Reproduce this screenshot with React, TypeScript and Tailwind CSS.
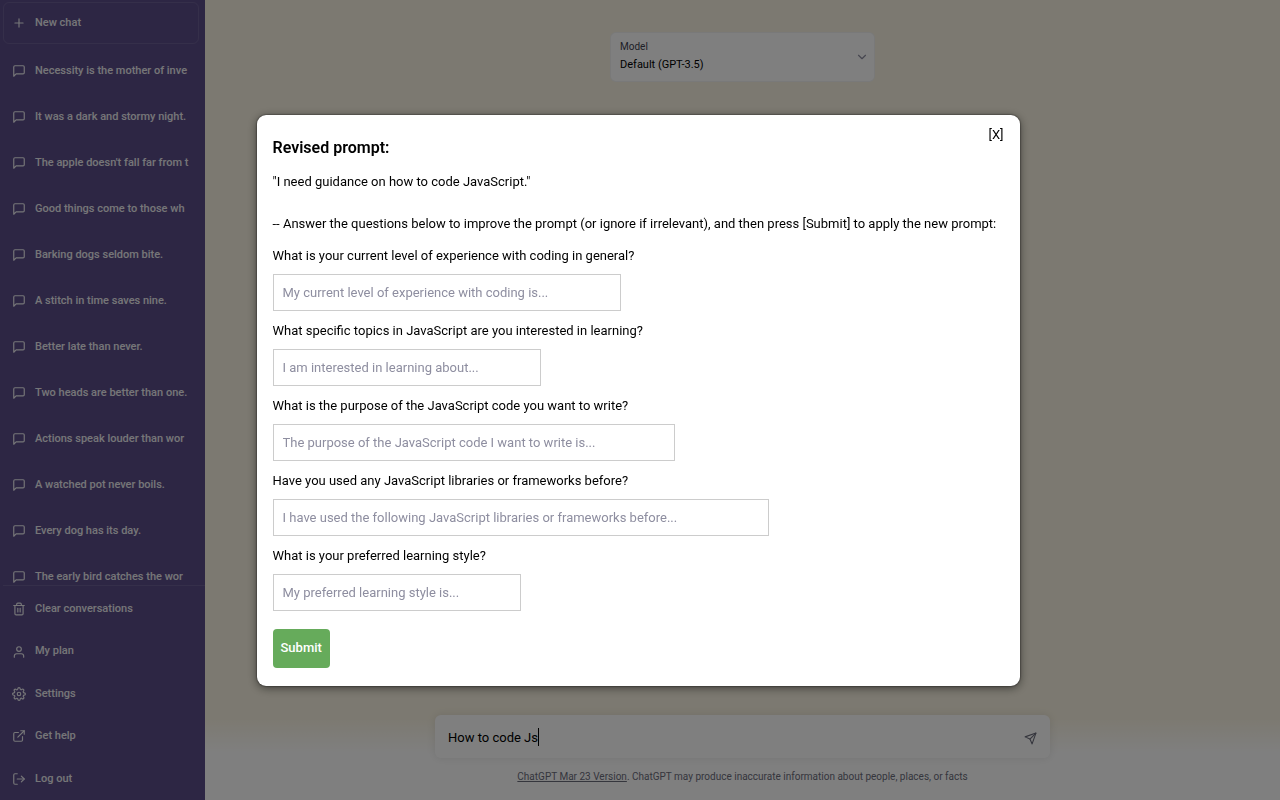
import React, { useState } from "react";
import { FiExternalLink, FiLogOut, FiMessageSquare, FiPlus, FiSend, FiSettings, FiTrash2, FiUser, FiChevronDown } from "react-icons/fi";

const conversations = [
  "Necessity is the mother of inve",
  "It was a dark and stormy night.",
  "The apple doesn't fall far from t",
  "Good things come to those wh",
  "Barking dogs seldom bite.",
  "A stitch in time saves nine.",
  "Better late than never.",
  "Two heads are better than one.",
  "Actions speak louder than wor",
  "A watched pot never boils.",
  "Every dog has its day.",
  "The early bird catches the wor",
];

const menuItems = [
  { label: "Clear conversations", icon: FiTrash2 },
  { label: "My plan", icon: FiUser },
  { label: "Settings", icon: FiSettings },
  { label: "Get help", icon: FiExternalLink },
  { label: "Log out", icon: FiLogOut },
];

const questions = [
  {
    id: "experience",
    label: "What is your current level of experience with coding in general?",
    placeholder: "My current level of experience with coding is...",
    width: "w-[348px]",
  },
  {
    id: "topics",
    label: "What specific topics in JavaScript are you interested in learning?",
    placeholder: "I am interested in learning about...",
    width: "w-[268px]",
  },
  {
    id: "purpose",
    label: "What is the purpose of the JavaScript code you want to write?",
    placeholder: "The purpose of the JavaScript code I want to write is...",
    width: "w-[402px]",
  },
  {
    id: "libraries",
    label: "Have you used any JavaScript libraries or frameworks before?",
    placeholder: "I have used the following JavaScript libraries or frameworks before...",
    width: "w-[496px]",
  },
  {
    id: "style",
    label: "What is your preferred learning style?",
    placeholder: "My preferred learning style is...",
    width: "w-[248px]",
  },
];

const Sidebar = () => (
  <nav className="flex w-[205px] shrink-0 flex-col bg-[#5a4c88] text-[11px] font-medium text-[#ececf1]">
    <button className="mt-[2px] mr-[6px] ml-[3px] flex h-[42px] shrink-0 items-center gap-[9px] rounded-md border border-white/10 px-2">
      <FiPlus size={14} />
      New chat
    </button>
    <ul className="mt-1 min-h-0 flex-1 overflow-hidden">
      {conversations.map((title) => (
        <li key={title}>
          <a href="#" className="flex h-[46px] items-center gap-[9px] overflow-hidden pl-3 whitespace-nowrap">
            <FiMessageSquare size={14} className="shrink-0" />
            {title}
          </a>
        </li>
      ))}
    </ul>
    <div className="ml-[3px] flex h-[215px] shrink-0 flex-col border-t border-white/10 pt-[2px]">
      {menuItems.map(({ label, icon: Icon }) => (
        <button key={label} className="flex flex-1 items-center gap-[9px] pl-[9px]">
          <Icon size={14} />
          {label}
        </button>
      ))}
    </div>
  </nav>
);

const ChatPanel = () => {
  const [message, setMessage] = useState("How to code Js");

  return (
    <main className="flex min-w-0 flex-1 flex-col items-center bg-[#f9f3e2]">
      <div className="mt-8 flex h-[50px] w-[265px] items-center rounded-md border border-black/5 bg-white pr-[5px] pl-[9px]">
        <div className="flex flex-1 flex-col">
          <label htmlFor="model" className="text-[10px] leading-[16px] text-[#40414f]">
            Model
          </label>
          <select id="model" className="appearance-none text-[11px] leading-[20px] text-black">
            <option>Default (GPT-3.5)</option>
          </select>
        </div>
        <FiChevronDown size={14} className="text-[#8e8ea0]" />
      </div>
      <div className="mt-auto flex w-full flex-col items-center bg-gradient-to-b from-transparent from-30% to-white to-60% pt-8">
        <div className="flex h-[43px] w-[615px] max-w-full items-center rounded-md bg-white px-[13px] shadow-[0_0_10px_rgba(0,0,0,0.1)]">
          <input
            aria-label="Message"
            value={message}
            onChange={(e) => setMessage(e.target.value)}
            className="[field-sizing:content] pt-[2px] text-[13px] text-black outline-none"
          />
          <span className="h-[18px] w-px bg-black" />
          <button aria-label="Send message" className="ml-auto pt-1 text-[#6b6c7b]">
            <FiSend size={13} />
          </button>
        </div>
        <p className="mt-[10px] mb-[15px] text-[10px] leading-[17px] text-[#6b6c7b]">
          <a href="#" className="underline">
            ChatGPT Mar 23 Version
          </a>
          . ChatGPT may produce inaccurate information about people, places, or facts
        </p>
      </div>
    </main>
  );
};

const RevisedPromptModal = () => (
  <div className="fixed inset-0 flex items-center justify-center bg-black/50 pr-1">
    <form
      role="dialog"
      aria-labelledby="modal-title"
      onSubmit={(e) => e.preventDefault()}
      className="w-[763px] rounded-[9px] bg-white px-4 pt-[10px] pb-[18px] text-[13px] leading-[20px] text-black shadow-[0_0_2px_rgba(0,0,0,0.8),0_2px_10px_rgba(0,0,0,0.5)]"
    >
      <div className="flex justify-between">
        <h2 id="modal-title" className="mt-[11px] text-[16px] leading-[24px] font-semibold">
          Revised prompt:
        </h2>
        <button type="button" className="h-5">
          [X]
        </button>
      </div>
      <p className="mt-3">"I need guidance on how to code JavaScript."</p>
      <p className="mt-[22px]">
        -- Answer the questions below to improve the prompt (or ignore if irrelevant), and then press [Submit] to apply
        the new prompt:
      </p>
      <div className="mt-3 flex flex-col gap-[10px]">
        {questions.map((question) => (
          <div key={question.id} className="flex flex-col items-start">
            <label htmlFor={question.id}>{question.label}</label>
            <input
              id={question.id}
              placeholder={question.placeholder}
              className={`mt-2 h-[37px] border border-[#ccc] px-[9px] placeholder:text-[#8e8ea0] ${question.width}`}
            />
          </div>
        ))}
      </div>
      <button type="submit" className="mt-[18px] h-[39px] rounded-[4px] bg-[#66ab5b] px-2 font-medium text-white">
        Submit
      </button>
    </form>
  </div>
);

export default function App() {
  return (
    <div className="flex h-screen font-[Roboto,sans-serif]">
      <Sidebar />
      <ChatPanel />
      <RevisedPromptModal />
    </div>
  );
}
